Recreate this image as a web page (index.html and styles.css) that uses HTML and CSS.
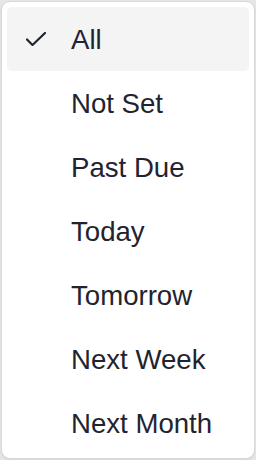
FILE: index.html
```html
<!DOCTYPE html>
<html lang="en">
<head>
  <meta charset="UTF-8">
  <meta name="viewport" content="width=device-width, initial-scale=1.0">
  <title>Due date filter</title>
  <link rel="stylesheet" href="styles.css">
</head>
<body>
  <ul class="menu">
    <li class="menu-item selected">
      <span class="check">
        <svg width="20" height="14" viewBox="0 0 20 14"><path d="M1 7.5 L6.5 13 L19 1" fill="none" stroke="#1f2430" stroke-width="2.2" stroke-linecap="round" stroke-linejoin="round"/></svg>
      </span>
      <span class="label">All</span>
    </li>
    <li class="menu-item"><span class="check"></span><span class="label">Not Set</span></li>
    <li class="menu-item"><span class="check"></span><span class="label">Past Due</span></li>
    <li class="menu-item"><span class="check"></span><span class="label">Today</span></li>
    <li class="menu-item"><span class="check"></span><span class="label">Tomorrow</span></li>
    <li class="menu-item"><span class="check"></span><span class="label">Next Week</span></li>
    <li class="menu-item"><span class="check"></span><span class="label">Next Month</span></li>
  </ul>
</body>
</html>
```

FILE: styles.css
```css
html, body {
  margin: 0;
  padding: 0;
  background-color: #e6e6e6;
}
body {
  font-family: "Liberation Sans", Arial, sans-serif;
  padding: 1px;
  height: 458px;
}
.menu {
  list-style: none;
  margin: 0;
  padding: 5px;
  height: 446px;
  background-color: #fff;
  border: 1px solid #d9d9d9;
  border-radius: 9px;
  box-shadow: 0 1px 2px rgba(0, 0, 0, 0.08);
}
.menu-item {
  display: flex;
  align-items: center;
  height: 64px;
  border-radius: 5px;
  color: #1f2430;
  font-size: 27.6px;
}
.menu-item.selected {
  background-color: #f4f4f5;
}
.label {
  padding-top: 2px;
}
.check {
  width: 64px;
  padding-left: 19px;
  box-sizing: border-box;
  display: flex;
  align-items: center;
}
.check svg {
  display: block;
}
```
